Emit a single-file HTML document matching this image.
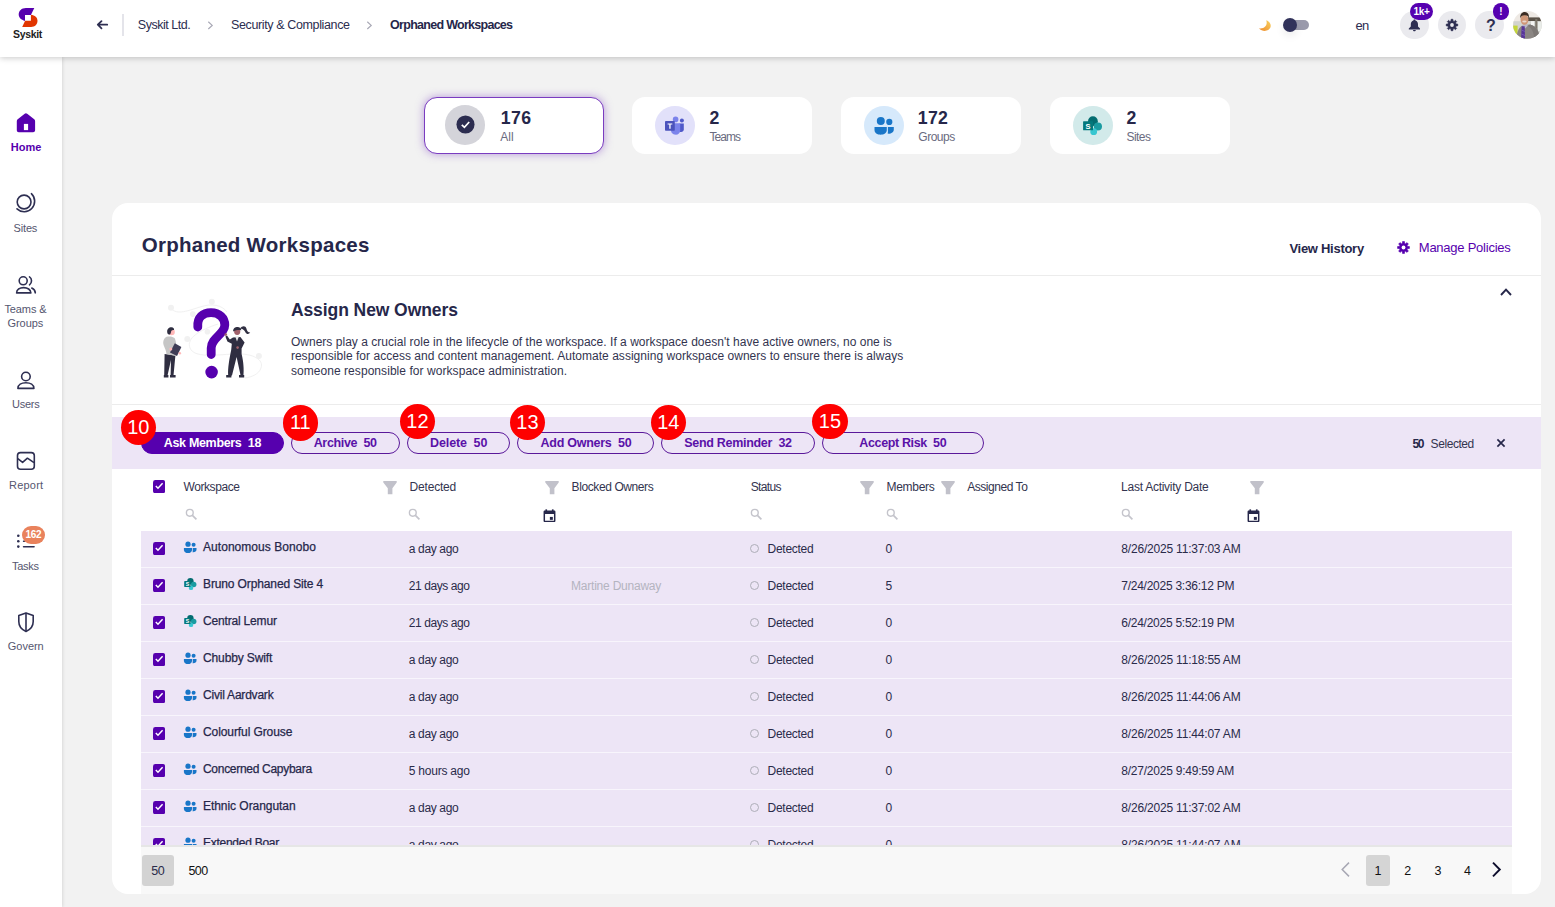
<!DOCTYPE html>
<html lang="en">
<head>
<meta charset="utf-8">
<title>Orphaned Workspaces</title>
<style>
*{box-sizing:border-box;margin:0;padding:0}
html,body{width:1555px;height:907px;overflow:hidden;background:#f2f2f2;font-family:"Liberation Sans",sans-serif;color:#2a2b4a}
.a{position:absolute}
.t{position:absolute;white-space:nowrap;line-height:1}
#hdr{left:0;top:0;width:1555px;height:57px;background:#fff;box-shadow:0 1px 6px rgba(0,0,0,.22);z-index:5}
#side{left:0;top:57px;width:62px;height:850px;background:#fff;box-shadow:1px 0 3px rgba(0,0,0,.10);z-index:4}
.nav{position:absolute;left:0;width:52px;text-align:center;font-size:11.5px;color:#55566f;line-height:14px}
.tile{position:absolute;top:97px;width:180px;height:57px;background:#fff;border-radius:13px}
.tile .ic{position:absolute;left:23.1px;top:8.8px;width:40px;height:39.3px;border-radius:50%}
.tile .n{position:absolute;left:76px;top:11px;font-size:18px;font-weight:700;color:#26274a;line-height:1}
.tile .l{position:absolute;left:76px;top:34px;font-size:12px;color:#6a6b80;line-height:1}
#card{left:112px;top:203px;width:1429px;height:691px;background:#fff;border-radius:16px;overflow:hidden}
.btn{position:absolute;top:432px;height:21.8px;border:1.5px solid #5a189a;border-radius:11px;color:#5a12a8;font-size:13px;font-weight:700;text-align:center;line-height:19px;white-space:nowrap}
.red{position:absolute;width:35.3px;height:35.3px;border-radius:50%;background:#fe0000;color:#fff;font-size:20px;text-align:center;line-height:35.3px}
.row{position:absolute;left:141px;width:1371px;height:36px;background:#ede5f6}
.c{position:absolute;white-space:nowrap;line-height:1;font-size:12px;color:#2a2b4a}
</style>
</head>
<body>
<div class="a" id="hdr">
<svg class="a" style="left:14px;top:4px" width="30" height="26" viewBox="14 4 30 26">
<path d="M34.3 8.1 H26 C21.5 8.1 18.7 11 18.7 14.6 C18.7 17.6 21 20 25 20.9 V14.9 H30.9 Z" fill="#5600ae"/>
<path d="M22.2 27 H31 C35 27 37.5 24.2 37.5 20.8 C37.5 17.6 35 15.1 30.9 14.7 V20.8 H25.1 Z" fill="#e13500"/>
</svg>
<div class="t" id="lg" style="left:13.11px;top:29.1px;font-size:10.5px;font-weight:700;color:#222;letter-spacing:-0.368px">Syskit</div>
<svg class="a" style="left:95.6px;top:19px" width="14" height="12" viewBox="0 0 14 12"><path d="M5.5 2.1 L1.8 5.7 L5.5 9.3 M2 5.7 H11.2" fill="none" stroke="#2e2f52" stroke-width="1.8" stroke-linecap="round" stroke-linejoin="round"/></svg>
<div class="a" style="left:122px;top:14px;width:2px;height:22px;background:#e4e4ea"></div>
<div class="t" id="b1" style="left:137.80px;top:18.6px;font-size:12.5px;color:#2c2d50;letter-spacing:-0.469px">Syskit Ltd.</div>
<svg class="a" style="left:207px;top:21px" width="7" height="9" viewBox="0 0 7 9"><path d="M1.3 0.8 L5.2 4.4 L1.3 8" fill="none" stroke="#a9a9b6" stroke-width="1.2"/></svg>
<div class="t" id="b2" style="left:231.00px;top:18.6px;font-size:12.5px;color:#2c2d50;letter-spacing:-0.374px">Security &amp; Compliance</div>
<svg class="a" style="left:366px;top:21px" width="7" height="9" viewBox="0 0 7 9"><path d="M1.3 0.8 L5.2 4.4 L1.3 8" fill="none" stroke="#a9a9b6" stroke-width="1.2"/></svg>
<div class="t" id="b3" style="left:390.11px;top:18.6px;font-size:12.5px;font-weight:700;color:#26274a;letter-spacing:-0.721px">Orphaned Workspaces</div>
<svg class="a" style="left:1257px;top:19px" width="16" height="14" viewBox="1257 19 16 14"><defs><linearGradient id="mg" x1="1" y1="0" x2="0" y2="1"><stop offset="0" stop-color="#f8d25e"/><stop offset="1" stop-color="#ee8a2e"/></linearGradient></defs><path d="M1266.3 20.3 C1269.5 21.6 1271.6 24.6 1270.4 27.6 C1269 31 1263 32.6 1258.8 28.3 C1263 29.2 1268.3 26.5 1266.3 20.3 Z" fill="url(#mg)"/></svg>
<div class="a" style="left:1284px;top:20px;width:25px;height:10px;border-radius:5px;background:#9a9aab"></div>
<div class="a" style="left:1283px;top:18px;width:14px;height:14px;border-radius:50%;background:#31325a;box-shadow:0 4px 8px rgba(0,0,0,.08)"></div>
<div class="t" id="en" style="left:1355.50px;top:19px;font-size:13px;color:#2c2d50;letter-spacing:-0.730px">en</div>
<div class="a" style="left:1400.1px;top:10.7px;width:28.6px;height:28.6px;border-radius:50%;background:#eaeaee"></div>
<svg class="a" style="left:1408px;top:19px" width="13" height="13" viewBox="0 0 13 13"><path d="M6.4 0.6 C7 0.6 7.4 1 7.4 1.6 C9.2 2.1 10 3.6 10 5.4 V7.6 L12 9.6 V10.4 H0.8 V9.6 L2.8 7.6 V5.4 C2.8 3.6 3.6 2.1 5.4 1.6 C5.4 1 5.8 0.6 6.4 0.6 Z M5 10.9 H7.8 C7.8 11.7 7.2 12.3 6.4 12.3 C5.6 12.3 5 11.7 5 10.9 Z" fill="#2e2f52"/></svg>
<div class="a" style="left:1410px;top:3px;width:23px;height:17px;border-radius:8.5px;background:#5600b0;color:#fff;font-size:10px;font-weight:700;text-align:center;line-height:17px;letter-spacing:-0.3px">1k+</div>
<div class="a" style="left:1437.7px;top:10.7px;width:28.6px;height:28.6px;border-radius:50%;background:#eaeaee"></div>
<svg class="a" style="left:1445px;top:18px" width="14" height="14" viewBox="-7 -7 14 14"><path d="M-1.01 -4.08 L-0.95 -5.72 L0.95 -5.72 L1.01 -4.08 L2.17 -3.60 L3.37 -4.72 L4.72 -3.37 L3.60 -2.17 L4.08 -1.01 L5.72 -0.95 L5.72 0.95 L4.08 1.01 L3.60 2.17 L4.72 3.37 L3.37 4.72 L2.17 3.60 L1.01 4.08 L0.95 5.72 L-0.95 5.72 L-1.01 4.08 L-2.17 3.60 L-3.37 4.72 L-4.72 3.37 L-3.60 2.17 L-4.08 1.01 L-5.72 0.95 L-5.72 -0.95 L-4.08 -1.01 L-3.60 -2.17 L-4.72 -3.37 L-3.37 -4.72 L-2.17 -3.60 Z" fill="#2e2f52" stroke="#2e2f52" stroke-width=".6" stroke-linejoin="round"/><circle r="1.9" fill="#eaeaee"/></svg>
<div class="a" style="left:1475.2px;top:10.7px;width:28.6px;height:28.6px;border-radius:50%;background:#eaeaee"></div>
<div class="t" style="left:1486px;top:17.8px;font-size:16px;font-weight:700;color:#2e2f52;letter-spacing:0">?</div>
<div class="a" style="left:1493px;top:3px;width:16px;height:17px;border-radius:8.5px;background:#5600b0;color:#fff;font-size:10px;font-weight:700;text-align:center;line-height:17px">!</div>
<svg class="a" style="left:1513px;top:11px" width="29" height="28" viewBox="1513 11 29 28"><defs><clipPath id="av"><ellipse cx="1527.4" cy="24.9" rx="14.3" ry="13.9"/></clipPath></defs><g clip-path="url(#av)"><rect x="1513" y="11" width="29" height="28" fill="#eee9e4"/><rect x="1528" y="17.4" width="14" height="3.8" fill="#5a5248"/><rect x="1513" y="21.2" width="29" height="18" fill="#d2d3cf"/><rect x="1531" y="21.2" width="3" height="10" fill="#f4f4f2"/><rect x="1535.2" y="19" width="2.2" height="13" fill="#7c766a"/><rect x="1538" y="22" width="4" height="9" fill="#e9ece8"/><rect x="1513" y="25.6" width="4.6" height="8.6" fill="#c4d53a"/><path d="M1516.6 39 C1516.8 31 1519 27 1523 25.2 L1530 24.6 C1536 26 1539.4 30 1539.4 39 Z" fill="#8b8683"/><path d="M1528 26 C1532 28 1534 33 1534 39 L1539.4 39 C1539.4 31 1536 26.5 1530 24.6 Z" fill="#7d7875"/><path d="M1521.6 25.2 L1524.8 23.6 L1528 25.6 L1525.2 28.4 Z" fill="#b9b8c8"/><path d="M1521.7 26.2 L1524.7 26.2 L1525 39 L1521 39 Z" fill="#583698"/><path d="M1521.5 30 L1524.8 31.5 M1521.3 34 L1524.9 35.5" stroke="#7a5cc0" stroke-width=".8"/><ellipse cx="1524.5" cy="19.6" rx="4" ry="5.2" fill="#d09777"/><ellipse cx="1524.4" cy="21.6" rx="2.2" ry="1" fill="#e9d6cc"/><path d="M1520.2 18.6 C1519.8 13.6 1522.6 11.9 1525 12 C1528 12.2 1529.4 14.8 1528.9 18.6 C1528.4 16.2 1527.4 15.2 1524.6 15.3 C1521.8 15.4 1520.7 16.6 1520.2 18.6 Z" fill="#3b2d23"/></g></svg>
</div>
<div class="a" id="side">
<svg class="a" style="left:15px;top:55px" width="22" height="22" viewBox="15 112 22 22"><path d="M25.9 113.3 C26.4 113.3 26.8 113.5 27.2 113.8 L34.2 119.3 C34.8 119.8 35.1 120.4 35.1 121.2 V130.3 C35.1 131.5 34.2 132.3 33.1 132.3 H18.8 C17.6 132.3 16.8 131.5 16.8 130.3 V121.2 C16.8 120.4 17.1 119.8 17.7 119.3 L24.7 113.8 C25 113.5 25.5 113.3 25.9 113.3 Z" fill="#5600ae"/><rect x="23.9" y="123.9" width="4.2" height="6.2" fill="#fff"/></svg>
<div class="t" id="n1" style="left:10.80px;top:84.6px;font-size:11px;color:#55566f;font-weight:700;color:#5600ae;letter-spacing:0.019px">Home</div>
<svg class="a" style="left:14px;top:135px" width="24" height="22" viewBox="14 192 24 22"><g fill="none" stroke="#2e2f52" stroke-width="1.6" stroke-linecap="round"><circle cx="24.1" cy="202" r="6.9"/><path d="M31.4 193.7 A10.4 10.4 0 1 1 17 208.8"/></g></svg>
<div class="t" id="n2" style="left:13.61px;top:165.6px;font-size:11px;color:#55566f;letter-spacing:-0.189px">Sites</div>
<svg class="a" style="left:14px;top:217px" width="24" height="22" viewBox="14 274 24 22"><g fill="none" stroke="#2e2f52" stroke-width="1.6" stroke-linecap="round" stroke-linejoin="round"><circle cx="23.2" cy="280.8" r="4"/><path d="M16.6 292.9 C16.6 289.6 19.8 287.6 23.6 287.6 C27.4 287.6 30.9 289.6 30.9 292.9 Z"/><path d="M29.5 276.9 C32.2 278.6 32.2 283 29.5 284.8"/><path d="M31.8 288 C33.8 288.9 35.2 290.6 35.3 292.9"/></g></svg>
<div class="t" id="n3a" style="left:4.41px;top:246.7px;font-size:11px;color:#55566f;letter-spacing:-0.092px">Teams &amp;</div>
<div class="t" id="n3b" style="left:7.41px;top:260.8px;font-size:11px;color:#55566f;letter-spacing:-0.034px">Groups</div>
<svg class="a" style="left:14px;top:312px" width="24" height="22" viewBox="14 369 24 22"><g fill="none" stroke="#2e2f52" stroke-width="1.6" stroke-linejoin="round"><circle cx="25.9" cy="376.5" r="4.3"/><path d="M17.9 388.4 C17.9 384.8 21.4 382.7 25.9 382.7 C30.4 382.7 33.9 384.8 33.9 388.4 Z"/></g></svg>
<div class="t" id="n4" style="left:12.00px;top:341.7px;font-size:11px;color:#55566f;letter-spacing:-0.231px">Users</div>
<svg class="a" style="left:14px;top:393px" width="24" height="22" viewBox="14 450 24 22"><g fill="none" stroke="#2e2f52" stroke-width="1.6" stroke-linejoin="round"><rect x="17.5" y="452.6" width="16.8" height="16.6" rx="3"/><path d="M17.8 458.6 L22.6 462.4 L27.4 458.2 L34 462.6"/></g></svg>
<div class="t" id="n5" style="left:9.00px;top:422.9px;font-size:11px;color:#55566f;letter-spacing:0.228px">Report</div>
<svg class="a" style="left:14px;top:474px" width="24" height="22" viewBox="14 531 24 22"><g fill="#2e2f52"><circle cx="18.3" cy="535.7" r="1.3"/><circle cx="18.3" cy="541.2" r="1.3"/><circle cx="18.3" cy="546.6" r="1.3"/><rect x="22.8" y="535" width="12" height="1.5" rx=".7"/><rect x="22.8" y="540.5" width="12" height="1.5" rx=".7"/><rect x="22.8" y="545.9" width="12" height="1.5" rx=".7"/></g></svg>
<div class="a" style="left:22px;top:469px;width:23px;height:18px;border-radius:9px;background:#e9825c;color:#fff;font-size:10px;font-weight:700;text-align:center;line-height:18px;letter-spacing:-0.3px">162</div>
<div class="t" id="n6" style="left:12.11px;top:503.7px;font-size:11px;color:#55566f;letter-spacing:-0.304px">Tasks</div>
<svg class="a" style="left:14px;top:554px" width="24" height="22" viewBox="14 611 24 22"><g fill="none" stroke="#2e2f52" stroke-width="1.6" stroke-linejoin="round"><path d="M26 612.9 L33.2 615.4 V621.5 C33.2 626.3 30.2 629.7 26 631.4 C21.8 629.7 18.8 626.3 18.8 621.5 V615.4 Z"/><path d="M26 613.2 V631"/></g></svg>
<div class="t" id="n7" style="left:7.80px;top:584.4px;font-size:11px;color:#55566f;letter-spacing:-0.031px">Govern</div>
</div>
<div class="a" id="tiles">
<div class="tile" style="left:424px;border:1.5px solid #7a3cc0;box-shadow:0 0 9px rgba(122,60,192,.5)"><div class="ic" style="left:20.4px;top:7.4px;width:40.1px;height:39.4px;background:#d4d4da"></div>
<svg class="a" style="left:30.9px;top:17px" width="19" height="19" viewBox="0 0 19 19"><circle cx="9.5" cy="9.5" r="9.05" fill="#2c2d50"/><path d="M5.8 9.8 L8.4 12.3 L13.2 7" fill="none" stroke="#fff" stroke-width="1.7"/></svg>
<div class="n t" id="t1n" style="left:75.80px;top:12.1px;font-size:17.7px;letter-spacing:0.363px">176</div><div class="l t" id="t1l" style="left:75.30px;top:33.2px;font-size:12px;letter-spacing:0.065px">All</div></div>
<div class="tile" style="left:632px"><div class="ic" style="background:#e2e1fa"></div><svg class="a" style="left:32px;top:19px" width="21" height="21" viewBox="664 116 21 21"><circle cx="681.9" cy="120.5" r="2" fill="#5059c9"/><path d="M679.5 123.4 H683.8 V129.5 C683.8 131 682.6 131.9 681.2 131.9 H679.5 Z" fill="#5059c9"/><circle cx="675.6" cy="119.4" r="2.8" fill="#7b83eb"/><path d="M671 123.3 H680.2 V130.6 C680.2 133 678.2 134.8 675.8 134.8 C673.4 134.8 671 133 671 130.6 Z" fill="#7b83eb"/><rect x="665" y="120.9" width="9.8" height="9.8" rx=".8" fill="#4b53bc"/><path d="M667.6 123.4 H672.3 V124.6 H670.6 V128.8 H669.3 V124.6 H667.6 Z" fill="#fff"/></svg><div class="n t" id="t2n" style="left:77.41px;font-size:17.7px;top:12.6px;letter-spacing:0.000px">2</div><div class="l t" id="t2l" style="left:77.41px;font-size:12px;top:33.7px;letter-spacing:-0.936px">Teams</div></div>
<div class="tile" style="left:841px"><div class="ic" style="background:#d6e9fb"></div><svg class="a" style="left:32px;top:19px" width="22" height="21" viewBox="873 116 22 21"><g fill="#1976c8"><circle cx="880.8" cy="121.1" r="4"/><circle cx="889.3" cy="121.9" r="3.1"/><path d="M874.5 127 H886.8 V130 C886.8 133 884 134.7 880.6 134.7 C877.2 134.7 874.5 133 874.5 130 Z"/><path d="M887.9 127 H893.8 V129.4 C893.8 132.2 891.2 133.9 887.6 133.6 C888 132.6 888 131.5 887.9 130.5 Z"/></g></svg><div class="n t" id="t3n" style="left:76.80px;font-size:17.7px;top:12.6px;letter-spacing:0.313px">172</div><div class="l t" id="t3l" style="left:77.30px;font-size:12px;top:33.7px;letter-spacing:-0.490px">Groups</div></div>
<div class="tile" style="left:1050px"><div class="ic" style="background:#d2eaea"></div><svg class="a" style="left:32px;top:18px" width="22" height="22" viewBox="1082 115 22 22"><circle cx="1092.9" cy="121.2" r="4.9" fill="#036c70"/><circle cx="1097.9" cy="126.5" r="4.1" fill="#1a9ba1"/><circle cx="1093.7" cy="131.7" r="3.4" fill="#37c6d0"/><rect x="1083.1" y="121.2" width="9.9" height="9.1" rx=".6" fill="#03787c"/><text x="1088" y="128.9" font-family="Liberation Sans" font-size="7.5" font-weight="700" fill="#fff" text-anchor="middle">S</text></svg><div class="n t" id="t4n" style="left:76.61px;font-size:17.7px;top:12.6px;letter-spacing:0.000px">2</div><div class="l t" id="t4l" style="left:76.61px;font-size:12px;top:33.7px;letter-spacing:-0.594px">Sites</div></div>
</div>
<div class="a" id="card"></div>
<div class="a" id="over">
<div class="t" id="ttl" style="left:141.70px;top:235.1px;font-size:20.5px;font-weight:700;color:#26274a;letter-spacing:0.266px">Orphaned Workspaces</div>
<div class="t" id="vh" style="left:1289.40px;top:241.9px;font-size:13px;font-weight:700;color:#26274a;letter-spacing:-0.278px">View History</div>
<svg class="a" style="left:1396px;top:240px" width="15" height="15" viewBox="-7.5 -7.5 15 15"><path d="M-1.04 -4.17 L-0.99 -5.92 L0.99 -5.92 L1.04 -4.17 L2.22 -3.68 L3.49 -4.88 L4.88 -3.49 L3.68 -2.22 L4.17 -1.04 L5.92 -0.99 L5.92 0.99 L4.17 1.04 L3.68 2.22 L4.88 3.49 L3.49 4.88 L2.22 3.68 L1.04 4.17 L0.99 5.92 L-0.99 5.92 L-1.04 4.17 L-2.22 3.68 L-3.49 4.88 L-4.88 3.49 L-3.68 2.22 L-4.17 1.04 L-5.92 0.99 L-5.92 -0.99 L-4.17 -1.04 L-3.68 -2.22 L-4.88 -3.49 L-3.49 -4.88 L-2.22 -3.68 Z" fill="#5600ae" stroke="#5600ae" stroke-width=".6" stroke-linejoin="round"/><circle r="1.9" fill="#fff"/></svg>
<div class="t" id="mp" style="left:1418.80px;top:241px;font-size:13px;color:#5600ae;letter-spacing:-0.242px">Manage Policies</div>
<div class="a" style="left:112px;top:275px;width:1429px;height:1px;background:#ececec"></div>
<svg class="a" style="left:1499px;top:287px" width="14" height="10" viewBox="0 0 14 10"><path d="M2 8 L7 2.6 L12 8" fill="none" stroke="#26274a" stroke-width="1.9"/></svg>
<svg class="a" style="left:150px;top:290px" width="125" height="100" viewBox="150 290 125 100"><g fill="none" stroke="#f1f1f1" stroke-width="1"><path d="M171 308 C176 316 190 310 200 307 C212 303 222 305 227 312"/><path d="M218 324 C200 330 186 338 190 348 C194 358 214 355 234 354 C254 353 264 360 261 368 C259 374 252 377 245 378"/></g><g fill="#f1f1f1"><circle cx="171" cy="307.8" r="3"/><circle cx="211.8" cy="301.7" r="3"/><circle cx="192.8" cy="314.1" r="2.8"/><circle cx="187.3" cy="339" r="3"/><circle cx="207.4" cy="331.7" r="2.8"/><circle cx="258.9" cy="356" r="3"/></g>
<path d="M197.8 327 C197 317 203 312.6 211 312.6 C219.5 312.6 224.8 318 224.8 325 C224.8 334 211.2 338 211.2 348 V354.5" fill="none" stroke="#5600ae" stroke-width="8.8" stroke-linecap="round"/><circle cx="211.6" cy="372.1" r="6.3" fill="#5600ae"/>
<g><path d="M164.6 354 L175.4 355.5 L173.5 375.5 H170.6 L171 360 L167.5 375.5 H164.2 Z" fill="#2f2e41"/><path d="M163.8 375 H168.4 V377.4 H163.8 Z M170 375 H175.6 V377.4 H170 Z" fill="#2f2e41"/><path d="M166.5 336.8 C169.5 336 172.8 336.4 174.6 338 C176.8 342 176.6 350 175.6 356 L166.4 354 C166.4 350 163.4 346 163.2 343 C163.2 340 164.6 337.6 166.5 336.8 Z" fill="#c6c6c6"/><path d="M174.8 343.2 L181.4 347 L177 356 L170 352.4 Z" fill="#3f3d56"/><circle cx="170.8" cy="349" r="1.5" fill="#ffb8b8"/><circle cx="179.8" cy="353.2" r="1.3" fill="#ffb8b8"/><circle cx="171.6" cy="332" r="3.2" fill="#ffb8b8"/><path d="M167.2 332 C166.8 328.6 169.4 327 171.6 327.2 C173.4 327.4 174.4 328.6 174 330 C172.4 329.6 171.2 330.2 171 332 C170.8 333.6 170.2 334.6 169 334.6 C167.8 334.4 167.3 333.2 167.2 332 Z" fill="#2f2e41"/></g>
<g><path d="M233 337.4 L240.4 337 L244.6 342.4 L241.6 348.6 L241.6 354 C243.6 362 244 370 243.4 375.4 H240.6 L236.6 357 L232 375.4 H228.2 C227.6 368 229.6 358 231.2 350 L231.8 343.8 L227.4 341.6 L225.4 336.4 L227 335.6 L229.8 339.6 Z" fill="#2f2e41"/><path d="M226.2 375 H231.4 V377.4 H226.2 Z M239 375 H244.2 V377.4 H239 Z" fill="#2f2e41"/><path d="M235.2 336.4 L239 336.2 L237 341.6 Z" fill="#e6e6e6"/><circle cx="225.8" cy="334.6" r="1.3" fill="#a0616a"/><circle cx="237.6" cy="347.6" r="1.3" fill="#a0616a"/><circle cx="237.2" cy="331.8" r="3.1" fill="#a0616a"/><path d="M233.2 331.6 C232.8 328.2 235.6 326.8 238 327 C240.4 327.2 241.4 328.8 241.2 330.4 C239 329.8 236.2 330 233.2 331.6 Z" fill="#2f2e41"/><path d="M240 328.4 C242.4 325.4 245.6 325.6 246.4 328.6 C247 331 248 332.6 250.2 332.6 C249 334.6 246.4 334.4 245.4 332.2 C244.6 330.4 243.6 329 240 328.4 Z" fill="#2f2e41"/></g></svg>
<div class="t" id="ano" style="left:290.90px;top:302.1px;font-size:17.5px;font-weight:700;color:#26274a;letter-spacing:-0.076px">Assign New Owners</div>
<div class="t" id="p1" style="left:290.90px;top:336.2px;font-size:12px;color:#33344f;letter-spacing:0.027px">Owners play a crucial role in the lifecycle of the workspace. If a workspace doesn't have active owners, no one is</div>
<div class="t" id="p2" style="left:290.90px;top:350.4px;font-size:12px;color:#33344f;letter-spacing:0.031px">responsible for access and content management. Automate assigning workspace owners to ensure there is always</div>
<div class="t" id="p3" style="left:290.90px;top:364.6px;font-size:12px;color:#33344f;letter-spacing:0.058px">someone responsible for workspace administration.</div>
<div class="a" style="left:112px;top:404px;width:1429px;height:1px;background:#ececec"></div>
<div class="a" style="left:112px;top:417px;width:1429px;height:51.5px;background:#ede5f6"></div>
<div class="btn" style="left:141px;width:143px;background:#5600ae;border-color:#5600ae;color:#fff;"></div>
<div class="t" id="bt0" style="left:163.80px;top:437.2px;font-size:12.5px;font-weight:700;color:#fff;letter-spacing:-0.327px">Ask Members&nbsp;&nbsp;18</div>
<div class="btn" style="left:291px;width:109px;"></div>
<div class="t" id="bt1" style="left:313.70px;top:437.2px;font-size:12.5px;font-weight:700;color:#5a12a8;letter-spacing:-0.345px">Archive&nbsp;&nbsp;50</div>
<div class="btn" style="left:407px;width:103px;"></div>
<div class="t" id="bt2" style="left:430.10px;top:437.2px;font-size:12.5px;font-weight:700;color:#5a12a8;letter-spacing:-0.124px">Delete&nbsp;&nbsp;50</div>
<div class="btn" style="left:517px;width:137px;"></div>
<div class="t" id="bt3" style="left:540.50px;top:437.2px;font-size:12.5px;font-weight:700;color:#5a12a8;letter-spacing:-0.255px">Add Owners&nbsp;&nbsp;50</div>
<div class="btn" style="left:661px;width:154px;"></div>
<div class="t" id="bt4" style="left:684.20px;top:437.2px;font-size:12.5px;font-weight:700;color:#5a12a8;letter-spacing:-0.293px">Send Reminder&nbsp;&nbsp;32</div>
<div class="btn" style="left:822px;width:162px;"></div>
<div class="t" id="bt5" style="left:859.30px;top:437.2px;font-size:12.5px;font-weight:700;color:#5a12a8;letter-spacing:-0.361px">Accept Risk&nbsp;&nbsp;50</div>
<div class="red" style="left:120.65px;top:409.85px">10</div>
<div class="red" style="left:282.65px;top:405.35px">11</div>
<div class="red" style="left:399.75px;top:403.85px">12</div>
<div class="red" style="left:509.75px;top:404.75px">13</div>
<div class="red" style="left:650.65px;top:404.75px">14</div>
<div class="red" style="left:812.35px;top:403.85px">15</div>
<div class="t" id="sel1" style="left:1412.50px;top:437.6px;font-size:12px;font-weight:700;color:#26274a;letter-spacing:-1.374px">50</div>
<div class="t" id="sel2" style="left:1430.60px;top:437.6px;font-size:12px;color:#33344f;letter-spacing:-0.432px">Selected</div>
<svg class="a" style="left:1496px;top:438px" width="10" height="10" viewBox="0 0 10 10"><path d="M1.4 1.4 L8.6 8.6 M8.6 1.4 L1.4 8.6" stroke="#26274a" stroke-width="1.7"/></svg>
<svg class="a" style="left:152.9px;top:479.7px" width="12.2" height="13.3" viewBox="0 0 12.2 13.3"><rect x="0" y="0" width="12.2" height="13.3" rx="2.4" fill="#5600ae"/><path d="M2.8 6 L5 8.3 L9.6 3.3" fill="none" stroke="#fff" stroke-width="1.45"/></svg>
<div class="c" id="h1" style="left:183.60px;top:480.6px;color:#33344f;letter-spacing:-0.441px">Workspace</div>
<div class="c" id="h2" style="left:409.60px;top:480.6px;color:#33344f;letter-spacing:-0.194px">Detected</div>
<div class="c" id="h3" style="left:571.60px;top:480.6px;color:#33344f;letter-spacing:-0.405px">Blocked Owners</div>
<div class="c" id="h4" style="left:750.70px;top:480.6px;color:#33344f;letter-spacing:-0.644px">Status</div>
<div class="c" id="h5" style="left:886.50px;top:480.6px;color:#33344f;letter-spacing:-0.302px">Members</div>
<div class="c" id="h6" style="left:967.20px;top:480.6px;color:#33344f;letter-spacing:-0.450px">Assigned To</div>
<div class="c" id="h7" style="left:1121.10px;top:480.6px;color:#33344f;letter-spacing:-0.260px">Last Activity Date</div>
<svg class="a" style="left:382.5px;top:480.6px" width="14" height="14" viewBox="0 0 14 14"><path d="M0.3 0.1 H13.7 V1.6 L9.4 7.2 V13.3 H4.8 V7.2 L0.3 1.6 Z" fill="#c1c1ca"/></svg>
<svg class="a" style="left:544.6px;top:480.6px" width="14" height="14" viewBox="0 0 14 14"><path d="M0.3 0.1 H13.7 V1.6 L9.4 7.2 V13.3 H4.8 V7.2 L0.3 1.6 Z" fill="#c1c1ca"/></svg>
<svg class="a" style="left:859.8px;top:480.6px" width="14" height="14" viewBox="0 0 14 14"><path d="M0.3 0.1 H13.7 V1.6 L9.4 7.2 V13.3 H4.8 V7.2 L0.3 1.6 Z" fill="#c1c1ca"/></svg>
<svg class="a" style="left:940.8px;top:480.6px" width="14" height="14" viewBox="0 0 14 14"><path d="M0.3 0.1 H13.7 V1.6 L9.4 7.2 V13.3 H4.8 V7.2 L0.3 1.6 Z" fill="#c1c1ca"/></svg>
<svg class="a" style="left:1249.8px;top:480.6px" width="14" height="14" viewBox="0 0 14 14"><path d="M0.3 0.1 H13.7 V1.6 L9.4 7.2 V13.3 H4.8 V7.2 L0.3 1.6 Z" fill="#c1c1ca"/></svg>
<svg class="a" style="left:185px;top:508px" width="13" height="13" viewBox="0 0 13 13"><circle cx="4.8" cy="4.8" r="3.4" fill="none" stroke="#c4c4cb" stroke-width="1.4"/><path d="M7.4 7.4 L11.4 11.4" stroke="#c4c4cb" stroke-width="1.7"/></svg>
<svg class="a" style="left:408px;top:508px" width="13" height="13" viewBox="0 0 13 13"><circle cx="4.8" cy="4.8" r="3.4" fill="none" stroke="#c4c4cb" stroke-width="1.4"/><path d="M7.4 7.4 L11.4 11.4" stroke="#c4c4cb" stroke-width="1.7"/></svg>
<svg class="a" style="left:750px;top:508px" width="13" height="13" viewBox="0 0 13 13"><circle cx="4.8" cy="4.8" r="3.4" fill="none" stroke="#c4c4cb" stroke-width="1.4"/><path d="M7.4 7.4 L11.4 11.4" stroke="#c4c4cb" stroke-width="1.7"/></svg>
<svg class="a" style="left:885.5px;top:508px" width="13" height="13" viewBox="0 0 13 13"><circle cx="4.8" cy="4.8" r="3.4" fill="none" stroke="#c4c4cb" stroke-width="1.4"/><path d="M7.4 7.4 L11.4 11.4" stroke="#c4c4cb" stroke-width="1.7"/></svg>
<svg class="a" style="left:1121px;top:508px" width="13" height="13" viewBox="0 0 13 13"><circle cx="4.8" cy="4.8" r="3.4" fill="none" stroke="#c4c4cb" stroke-width="1.4"/><path d="M7.4 7.4 L11.4 11.4" stroke="#c4c4cb" stroke-width="1.7"/></svg>
<svg class="a" style="left:542.7px;top:508.7px" width="13" height="13.8" viewBox="0 0 14 15" preserveAspectRatio="none"><path d="M2 1.6 H12 C12.8 1.6 13.4 2.2 13.4 3 V13 C13.4 13.8 12.8 14.4 12 14.4 H2 C1.2 14.4 0.6 13.8 0.6 13 V3 C0.6 2.2 1.2 1.6 2 1.6 Z M2.2 5.4 V12.8 H11.8 V5.4 Z" fill="#26274a" fill-rule="evenodd"/><rect x="2.6" y=".4" width="1.8" height="2.4" fill="#26274a"/><rect x="9.6" y=".4" width="1.8" height="2.4" fill="#26274a"/><rect x="7.4" y="8.6" width="3.2" height="3.2" fill="#26274a"/></svg>
<svg class="a" style="left:1247.4px;top:508.7px" width="13" height="13.8" viewBox="0 0 14 15" preserveAspectRatio="none"><path d="M2 1.6 H12 C12.8 1.6 13.4 2.2 13.4 3 V13 C13.4 13.8 12.8 14.4 12 14.4 H2 C1.2 14.4 0.6 13.8 0.6 13 V3 C0.6 2.2 1.2 1.6 2 1.6 Z M2.2 5.4 V12.8 H11.8 V5.4 Z" fill="#26274a" fill-rule="evenodd"/><rect x="2.6" y=".4" width="1.8" height="2.4" fill="#26274a"/><rect x="9.6" y=".4" width="1.8" height="2.4" fill="#26274a"/><rect x="7.4" y="8.6" width="3.2" height="3.2" fill="#26274a"/></svg>
<div class="row" style="top:531px"></div><div class="a" style="left:141px;top:567px;width:1371px;height:1px;background:#f8f5fc"></div>
<svg class="a" style="left:152.9px;top:541.8px" width="12.2" height="13.3" viewBox="0 0 12.2 13.3"><rect x="0" y="0" width="12.2" height="13.3" rx="2.4" fill="#5600ae"/><path d="M2.8 6 L5 8.3 L9.6 3.3" fill="none" stroke="#fff" stroke-width="1.45"/></svg>
<svg class="a" style="left:182.8px;top:540.5px" width="14" height="13" viewBox="0 0 14 13"><g fill="#1976c8"><circle cx="5" cy="3.2" r="2.6"/><circle cx="10.6" cy="3.8" r="2"/><path d="M0.9 7 H9 V9 C9 11 7.2 12.1 5 12.1 C2.8 12.1 0.9 11 0.9 9 Z"/><path d="M9.7 7 H13.5 V8.6 C13.5 10.4 11.9 11.5 9.5 11.3 C9.8 10.6 9.8 9.9 9.7 9.2 Z"/></g></svg>
<div class="c" id="r0a" style="left:203.00px;top:540.85px;color:#26274a;font-size:12px;-webkit-text-stroke:.25px #26274a;letter-spacing:0.049px">Autonomous Bonobo</div>
<div class="c" id="r0b" style="left:408.80px;top:542.90px;letter-spacing:-0.355px">a day ago</div>
<div class="a" style="left:750px;top:543.6px;width:9px;height:9px;border-radius:50%;border:1.2px solid #aeaeb8"></div>
<div class="c" id="r0d" style="left:767.50px;top:542.90px;letter-spacing:-0.265px">Detected</div>
<div class="c" style="left:885.5px;top:542.90px">0</div>
<div class="c" id="r0e" style="left:1121.30px;top:542.90px;letter-spacing:-0.194px">8/26/2025 11:37:03 AM</div>
<div class="row" style="top:568px"></div><div class="a" style="left:141px;top:604px;width:1371px;height:1px;background:#f8f5fc"></div>
<svg class="a" style="left:152.9px;top:578.8px" width="12.2" height="13.3" viewBox="0 0 12.2 13.3"><rect x="0" y="0" width="12.2" height="13.3" rx="2.4" fill="#5600ae"/><path d="M2.8 6 L5 8.3 L9.6 3.3" fill="none" stroke="#fff" stroke-width="1.45"/></svg>
<svg class="a" style="left:183.5px;top:577px" width="13.6" height="13.6" viewBox="0 0 14 14"><circle cx="6.6" cy="4.3" r="3.3" fill="#036c70"/><circle cx="10" cy="7.8" r="2.8" fill="#1a9ba1"/><circle cx="7.2" cy="11.2" r="2.3" fill="#37c6d0"/><rect x=".2" y="4.2" width="6.6" height="6.2" rx=".5" fill="#03787c"/><text x="3.5" y="9.4" font-family="Liberation Sans" font-size="5.4" font-weight="700" fill="#fff" text-anchor="middle">S</text></svg>
<div class="c" id="r1a" style="left:203.00px;top:577.85px;color:#26274a;font-size:12px;-webkit-text-stroke:.25px #26274a;letter-spacing:-0.124px">Bruno Orphaned Site 4</div>
<div class="c" id="r1b" style="left:408.80px;top:579.90px;letter-spacing:-0.431px">21 days ago</div>
<div class="c" id="r1c" style="left:571.10px;top:579.90px;color:#b4b4c0;letter-spacing:-0.227px">Martine Dunaway</div>
<div class="a" style="left:750px;top:580.6px;width:9px;height:9px;border-radius:50%;border:1.2px solid #aeaeb8"></div>
<div class="c" id="r1d" style="left:767.50px;top:579.90px;letter-spacing:-0.265px">Detected</div>
<div class="c" style="left:885.5px;top:579.90px">5</div>
<div class="c" id="r1e" style="left:1121.30px;top:579.90px;letter-spacing:-0.258px">7/24/2025 3:36:12 PM</div>
<div class="row" style="top:605px"></div><div class="a" style="left:141px;top:641px;width:1371px;height:1px;background:#f8f5fc"></div>
<svg class="a" style="left:152.9px;top:615.8px" width="12.2" height="13.3" viewBox="0 0 12.2 13.3"><rect x="0" y="0" width="12.2" height="13.3" rx="2.4" fill="#5600ae"/><path d="M2.8 6 L5 8.3 L9.6 3.3" fill="none" stroke="#fff" stroke-width="1.45"/></svg>
<svg class="a" style="left:183.5px;top:614px" width="13.6" height="13.6" viewBox="0 0 14 14"><circle cx="6.6" cy="4.3" r="3.3" fill="#036c70"/><circle cx="10" cy="7.8" r="2.8" fill="#1a9ba1"/><circle cx="7.2" cy="11.2" r="2.3" fill="#37c6d0"/><rect x=".2" y="4.2" width="6.6" height="6.2" rx=".5" fill="#03787c"/><text x="3.5" y="9.4" font-family="Liberation Sans" font-size="5.4" font-weight="700" fill="#fff" text-anchor="middle">S</text></svg>
<div class="c" id="r2a" style="left:203.00px;top:614.85px;color:#26274a;font-size:12px;-webkit-text-stroke:.25px #26274a;letter-spacing:-0.178px">Central Lemur</div>
<div class="c" id="r2b" style="left:408.80px;top:616.90px;letter-spacing:-0.431px">21 days ago</div>
<div class="a" style="left:750px;top:617.6px;width:9px;height:9px;border-radius:50%;border:1.2px solid #aeaeb8"></div>
<div class="c" id="r2d" style="left:767.50px;top:616.90px;letter-spacing:-0.265px">Detected</div>
<div class="c" style="left:885.5px;top:616.90px">0</div>
<div class="c" id="r2e" style="left:1121.30px;top:616.90px;letter-spacing:-0.258px">6/24/2025 5:52:19 PM</div>
<div class="row" style="top:642px"></div><div class="a" style="left:141px;top:678px;width:1371px;height:1px;background:#f8f5fc"></div>
<svg class="a" style="left:152.9px;top:652.8px" width="12.2" height="13.3" viewBox="0 0 12.2 13.3"><rect x="0" y="0" width="12.2" height="13.3" rx="2.4" fill="#5600ae"/><path d="M2.8 6 L5 8.3 L9.6 3.3" fill="none" stroke="#fff" stroke-width="1.45"/></svg>
<svg class="a" style="left:182.8px;top:651.5px" width="14" height="13" viewBox="0 0 14 13"><g fill="#1976c8"><circle cx="5" cy="3.2" r="2.6"/><circle cx="10.6" cy="3.8" r="2"/><path d="M0.9 7 H9 V9 C9 11 7.2 12.1 5 12.1 C2.8 12.1 0.9 11 0.9 9 Z"/><path d="M9.7 7 H13.5 V8.6 C13.5 10.4 11.9 11.5 9.5 11.3 C9.8 10.6 9.8 9.9 9.7 9.2 Z"/></g></svg>
<div class="c" id="r3a" style="left:203.00px;top:651.85px;color:#26274a;font-size:12px;-webkit-text-stroke:.25px #26274a;letter-spacing:-0.124px">Chubby Swift</div>
<div class="c" id="r3b" style="left:408.80px;top:653.90px;letter-spacing:-0.355px">a day ago</div>
<div class="a" style="left:750px;top:654.6px;width:9px;height:9px;border-radius:50%;border:1.2px solid #aeaeb8"></div>
<div class="c" id="r3d" style="left:767.50px;top:653.90px;letter-spacing:-0.265px">Detected</div>
<div class="c" style="left:885.5px;top:653.90px">0</div>
<div class="c" id="r3e" style="left:1121.30px;top:653.90px;letter-spacing:-0.194px">8/26/2025 11:18:55 AM</div>
<div class="row" style="top:679px"></div><div class="a" style="left:141px;top:715px;width:1371px;height:1px;background:#f8f5fc"></div>
<svg class="a" style="left:152.9px;top:689.8px" width="12.2" height="13.3" viewBox="0 0 12.2 13.3"><rect x="0" y="0" width="12.2" height="13.3" rx="2.4" fill="#5600ae"/><path d="M2.8 6 L5 8.3 L9.6 3.3" fill="none" stroke="#fff" stroke-width="1.45"/></svg>
<svg class="a" style="left:182.8px;top:688.5px" width="14" height="13" viewBox="0 0 14 13"><g fill="#1976c8"><circle cx="5" cy="3.2" r="2.6"/><circle cx="10.6" cy="3.8" r="2"/><path d="M0.9 7 H9 V9 C9 11 7.2 12.1 5 12.1 C2.8 12.1 0.9 11 0.9 9 Z"/><path d="M9.7 7 H13.5 V8.6 C13.5 10.4 11.9 11.5 9.5 11.3 C9.8 10.6 9.8 9.9 9.7 9.2 Z"/></g></svg>
<div class="c" id="r4a" style="left:203.00px;top:688.85px;color:#26274a;font-size:12px;-webkit-text-stroke:.25px #26274a;letter-spacing:-0.209px">Civil Aardvark</div>
<div class="c" id="r4b" style="left:408.80px;top:690.90px;letter-spacing:-0.355px">a day ago</div>
<div class="a" style="left:750px;top:691.6px;width:9px;height:9px;border-radius:50%;border:1.2px solid #aeaeb8"></div>
<div class="c" id="r4d" style="left:767.50px;top:690.90px;letter-spacing:-0.265px">Detected</div>
<div class="c" style="left:885.5px;top:690.90px">0</div>
<div class="c" id="r4e" style="left:1121.30px;top:690.90px;letter-spacing:-0.194px">8/26/2025 11:44:06 AM</div>
<div class="row" style="top:716px"></div><div class="a" style="left:141px;top:752px;width:1371px;height:1px;background:#f8f5fc"></div>
<svg class="a" style="left:152.9px;top:726.8px" width="12.2" height="13.3" viewBox="0 0 12.2 13.3"><rect x="0" y="0" width="12.2" height="13.3" rx="2.4" fill="#5600ae"/><path d="M2.8 6 L5 8.3 L9.6 3.3" fill="none" stroke="#fff" stroke-width="1.45"/></svg>
<svg class="a" style="left:182.8px;top:725.5px" width="14" height="13" viewBox="0 0 14 13"><g fill="#1976c8"><circle cx="5" cy="3.2" r="2.6"/><circle cx="10.6" cy="3.8" r="2"/><path d="M0.9 7 H9 V9 C9 11 7.2 12.1 5 12.1 C2.8 12.1 0.9 11 0.9 9 Z"/><path d="M9.7 7 H13.5 V8.6 C13.5 10.4 11.9 11.5 9.5 11.3 C9.8 10.6 9.8 9.9 9.7 9.2 Z"/></g></svg>
<div class="c" id="r5a" style="left:203.00px;top:725.85px;color:#26274a;font-size:12px;-webkit-text-stroke:.25px #26274a;letter-spacing:-0.089px">Colourful Grouse</div>
<div class="c" id="r5b" style="left:408.80px;top:727.90px;letter-spacing:-0.355px">a day ago</div>
<div class="a" style="left:750px;top:728.6px;width:9px;height:9px;border-radius:50%;border:1.2px solid #aeaeb8"></div>
<div class="c" id="r5d" style="left:767.50px;top:727.90px;letter-spacing:-0.265px">Detected</div>
<div class="c" style="left:885.5px;top:727.90px">0</div>
<div class="c" id="r5e" style="left:1121.30px;top:727.90px;letter-spacing:-0.194px">8/26/2025 11:44:07 AM</div>
<div class="row" style="top:753px"></div><div class="a" style="left:141px;top:789px;width:1371px;height:1px;background:#f8f5fc"></div>
<svg class="a" style="left:152.9px;top:763.8px" width="12.2" height="13.3" viewBox="0 0 12.2 13.3"><rect x="0" y="0" width="12.2" height="13.3" rx="2.4" fill="#5600ae"/><path d="M2.8 6 L5 8.3 L9.6 3.3" fill="none" stroke="#fff" stroke-width="1.45"/></svg>
<svg class="a" style="left:182.8px;top:762.5px" width="14" height="13" viewBox="0 0 14 13"><g fill="#1976c8"><circle cx="5" cy="3.2" r="2.6"/><circle cx="10.6" cy="3.8" r="2"/><path d="M0.9 7 H9 V9 C9 11 7.2 12.1 5 12.1 C2.8 12.1 0.9 11 0.9 9 Z"/><path d="M9.7 7 H13.5 V8.6 C13.5 10.4 11.9 11.5 9.5 11.3 C9.8 10.6 9.8 9.9 9.7 9.2 Z"/></g></svg>
<div class="c" id="r6a" style="left:203.00px;top:762.85px;color:#26274a;font-size:12px;-webkit-text-stroke:.25px #26274a;letter-spacing:-0.294px">Concerned Capybara</div>
<div class="c" id="r6b" style="left:408.80px;top:764.90px;letter-spacing:-0.231px">5 hours ago</div>
<div class="a" style="left:750px;top:765.6px;width:9px;height:9px;border-radius:50%;border:1.2px solid #aeaeb8"></div>
<div class="c" id="r6d" style="left:767.50px;top:764.90px;letter-spacing:-0.265px">Detected</div>
<div class="c" style="left:885.5px;top:764.90px">0</div>
<div class="c" id="r6e" style="left:1121.30px;top:764.90px;letter-spacing:-0.231px">8/27/2025 9:49:59 AM</div>
<div class="row" style="top:790px"></div><div class="a" style="left:141px;top:826px;width:1371px;height:1px;background:#f8f5fc"></div>
<svg class="a" style="left:152.9px;top:800.8px" width="12.2" height="13.3" viewBox="0 0 12.2 13.3"><rect x="0" y="0" width="12.2" height="13.3" rx="2.4" fill="#5600ae"/><path d="M2.8 6 L5 8.3 L9.6 3.3" fill="none" stroke="#fff" stroke-width="1.45"/></svg>
<svg class="a" style="left:182.8px;top:799.5px" width="14" height="13" viewBox="0 0 14 13"><g fill="#1976c8"><circle cx="5" cy="3.2" r="2.6"/><circle cx="10.6" cy="3.8" r="2"/><path d="M0.9 7 H9 V9 C9 11 7.2 12.1 5 12.1 C2.8 12.1 0.9 11 0.9 9 Z"/><path d="M9.7 7 H13.5 V8.6 C13.5 10.4 11.9 11.5 9.5 11.3 C9.8 10.6 9.8 9.9 9.7 9.2 Z"/></g></svg>
<div class="c" id="r7a" style="left:203.00px;top:799.85px;color:#26274a;font-size:12px;-webkit-text-stroke:.25px #26274a;letter-spacing:-0.048px">Ethnic Orangutan</div>
<div class="c" id="r7b" style="left:408.80px;top:801.90px;letter-spacing:-0.355px">a day ago</div>
<div class="a" style="left:750px;top:802.6px;width:9px;height:9px;border-radius:50%;border:1.2px solid #aeaeb8"></div>
<div class="c" id="r7d" style="left:767.50px;top:801.90px;letter-spacing:-0.265px">Detected</div>
<div class="c" style="left:885.5px;top:801.90px">0</div>
<div class="c" id="r7e" style="left:1121.30px;top:801.90px;letter-spacing:-0.194px">8/26/2025 11:37:02 AM</div>
<div class="row" style="top:827px"></div><div class="a" style="left:141px;top:863px;width:1371px;height:1px;background:#f8f5fc"></div>
<svg class="a" style="left:152.9px;top:837.8px" width="12.2" height="13.3" viewBox="0 0 12.2 13.3"><rect x="0" y="0" width="12.2" height="13.3" rx="2.4" fill="#5600ae"/><path d="M2.8 6 L5 8.3 L9.6 3.3" fill="none" stroke="#fff" stroke-width="1.45"/></svg>
<svg class="a" style="left:182.8px;top:836.5px" width="14" height="13" viewBox="0 0 14 13"><g fill="#1976c8"><circle cx="5" cy="3.2" r="2.6"/><circle cx="10.6" cy="3.8" r="2"/><path d="M0.9 7 H9 V9 C9 11 7.2 12.1 5 12.1 C2.8 12.1 0.9 11 0.9 9 Z"/><path d="M9.7 7 H13.5 V8.6 C13.5 10.4 11.9 11.5 9.5 11.3 C9.8 10.6 9.8 9.9 9.7 9.2 Z"/></g></svg>
<div class="c" id="r8a" style="left:203.00px;top:836.85px;color:#26274a;font-size:12px;-webkit-text-stroke:.25px #26274a;letter-spacing:-0.266px">Extended Boar</div>
<div class="c" id="r8b" style="left:408.80px;top:838.90px;letter-spacing:-0.355px">a day ago</div>
<div class="a" style="left:750px;top:839.6px;width:9px;height:9px;border-radius:50%;border:1.2px solid #aeaeb8"></div>
<div class="c" id="r8d" style="left:767.50px;top:838.90px;letter-spacing:-0.265px">Detected</div>
<div class="c" style="left:885.5px;top:838.90px">0</div>
<div class="c" id="r8e" style="left:1121.30px;top:838.90px;letter-spacing:-0.194px">8/26/2025 11:44:07 AM</div>
<div class="a" style="left:141px;top:845px;width:1371px;height:49px;background:#f8f8f8;border-top:2px solid #e6e6e6"></div>
<div class="a" style="left:141px;top:894px;width:1371px;height:14px;background:#f2f2f2"></div>
<div class="a" style="left:142px;top:855px;width:32px;height:31px;border-radius:3px;background:#d3d3d3;font-size:12.5px;color:#2a2b4a;text-align:center;line-height:32px;letter-spacing:-0.5px;text-indent:-0.5px">50</div>
<div class="c" style="left:188.5px;top:865.3px;color:#111;font-size:12.5px;letter-spacing:-0.6px">500</div>
<svg class="a" style="left:1340px;top:861px" width="11" height="17" viewBox="0 0 11 17"><path d="M9 1.6 L2.2 8.5 L9 15.4" fill="none" stroke="#a8a8b4" stroke-width="1.5"/></svg>
<div class="a" style="left:1366px;top:855px;width:24px;height:31px;border-radius:3px;background:#d5d5d5"></div>
<div class="c" style="left:1368px;width:20px;text-align:center;top:865.3px;color:#111;font-size:12.5px">1</div>
<div class="c" style="left:1397.8px;width:20px;text-align:center;top:865.3px;color:#111;font-size:12.5px">2</div>
<div class="c" style="left:1427.9px;width:20px;text-align:center;top:865.3px;color:#111;font-size:12.5px">3</div>
<div class="c" style="left:1457.6px;width:20px;text-align:center;top:865.3px;color:#111;font-size:12.5px">4</div>
<svg class="a" style="left:1490.6px;top:861px" width="11" height="17" viewBox="0 0 11 17"><path d="M2 1.6 L8.8 8.5 L2 15.4" fill="none" stroke="#0c0c2c" stroke-width="1.9"/></svg>
</div>
</body>
</html>
